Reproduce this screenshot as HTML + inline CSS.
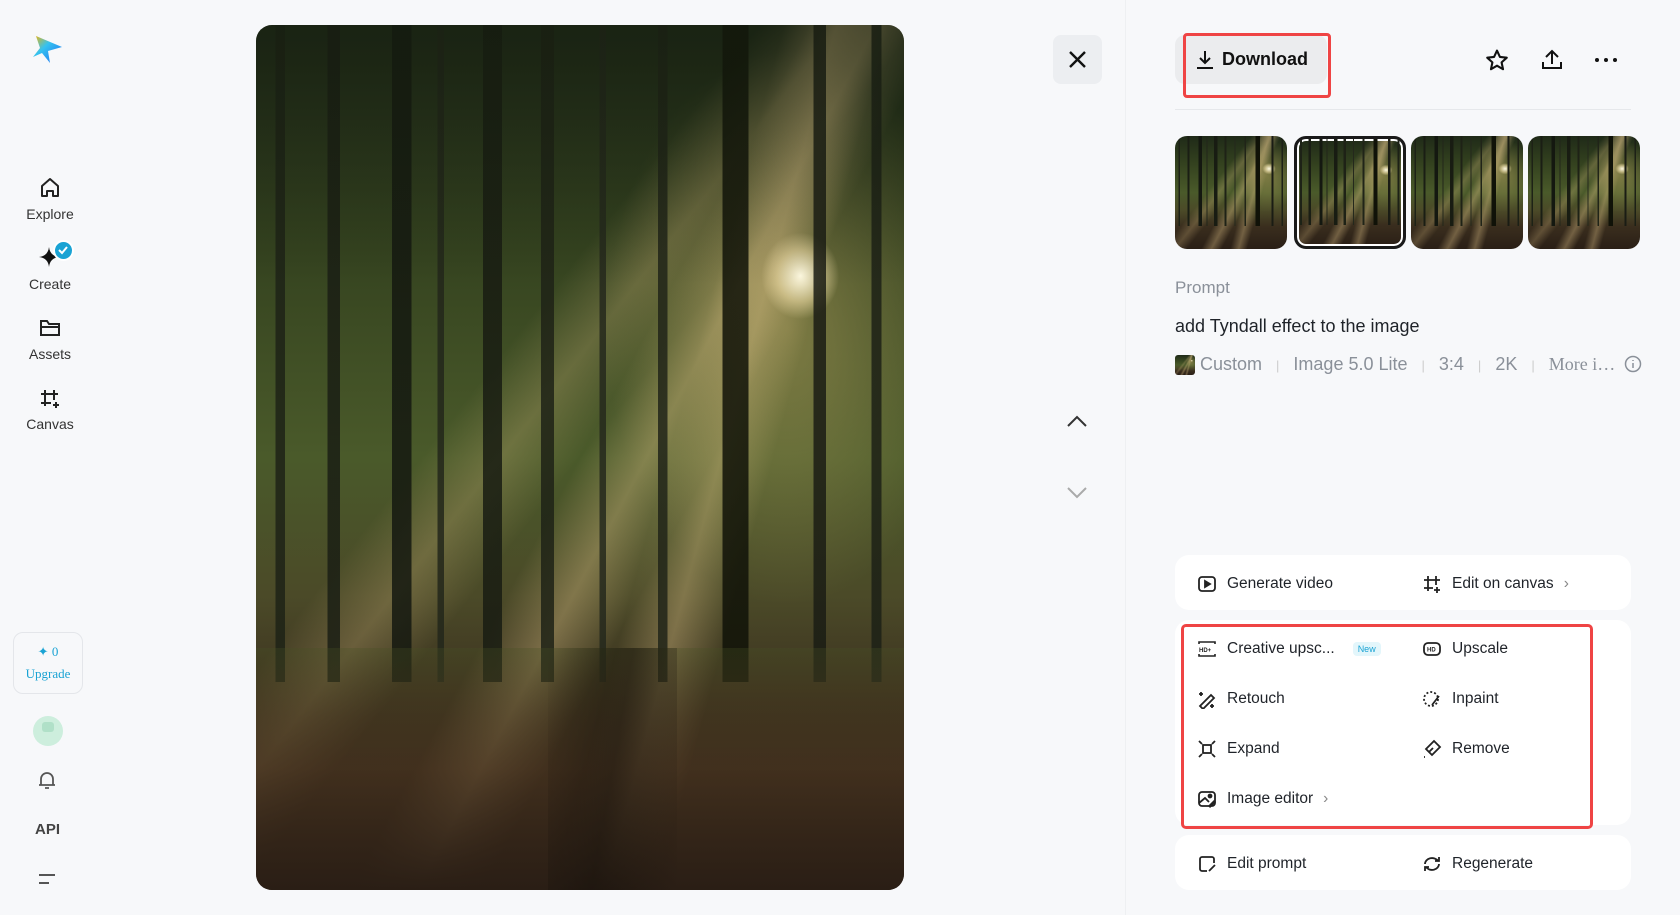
<!DOCTYPE html>
<html><head><meta charset="utf-8"><style>
*{box-sizing:border-box;margin:0;padding:0}
body{width:1680px;height:915px;background:#f7f8fa;font-family:"Liberation Sans",sans-serif;color:#1f2329;position:relative;overflow:hidden}
.abs{position:absolute}
.nav{position:absolute;left:0;width:100px;text-align:center;font-size:14px;color:#333}
.forest{background:
 radial-gradient(ellipse 6% 5% at 84% 29%,rgba(255,250,225,1),rgba(255,235,180,.5) 60%,transparent 100%),
 linear-gradient(118deg,transparent 50%,rgba(230,200,140,.35) 56%,transparent 62%),
 linear-gradient(105deg,transparent 60%,rgba(230,200,140,.35) 66%,transparent 72%),
 linear-gradient(128deg,transparent 38%,rgba(220,190,130,.25) 44%,transparent 50%),
 radial-gradient(ellipse 35% 40% at 82% 35%,rgba(190,170,100,.5),transparent 80%),
 linear-gradient(180deg,#1f2a18 0%,#34421f 25%,#4a5a2a 50%,#4b4a28 66%,#3a2e1e 80%,#2a1f16 100%);}
.trees{background:
 linear-gradient(90deg,
 transparent 3%,#1d2216 3%,#1d2216 4.5%,transparent 4.5%,
 transparent 11%,#1a1e14 11%,#1a1e14 13%,transparent 13%,
 transparent 21%,#141810 21%,#141810 24%,transparent 24%,
 transparent 28%,#22261a 28%,#22261a 29%,transparent 29%,
 transparent 35%,#181c12 35%,#181c12 38%,transparent 38%,
 transparent 44%,#1e2216 44%,#1e2216 46%,transparent 46%,
 transparent 53%,#24281c 53%,#24281c 54%,transparent 54%,
 transparent 62%,#202418 62%,#202418 63.5%,transparent 63.5%,
 transparent 72%,#101208 72%,#101208 76%,transparent 76%,
 transparent 86%,#1a1c14 86%,#1a1c14 88%,transparent 88%,
 transparent 95%,#1c2016 95%,#1c2016 96.5%,transparent 96.5%);}
.card{position:absolute;left:1175px;width:456px;background:#fff;border-radius:14px}
.row{position:absolute;font-size:15.5px;color:#1f2329;display:flex;align-items:center;gap:10px}
.row svg{width:20px;height:20px}
.thumb{position:absolute;top:136px;width:112px;height:113px;border-radius:12px;overflow:hidden}
</style></head><body>
<svg class="abs" style="left:30px;top:33px" width="34" height="34" viewBox="0 0 34 34"><defs><linearGradient id="lg" x1="0" y1="0" x2="1" y2="1"><stop offset="0" stop-color="#f6b400"/><stop offset=".4" stop-color="#35c2f0"/><stop offset="1" stop-color="#1d6af2"/></linearGradient></defs><path d="M6 3 L32 14 L18 18 L20 30 L12 20 L3 24 L10 15Z" fill="url(#lg)"/></svg>
<svg class="abs" style="left:38px;top:176px" width="24" height="24" viewBox="0 0 24 24" fill="none" stroke="#222" stroke-width="2"><path d="M4 10 L12 3 L20 10 V20 H15 V15 H9 V20 H4Z" stroke-linejoin="round"/></svg>
<div class="nav" style="top:206px">Explore</div>
<svg class="abs" style="left:38px;top:246px" width="22" height="22" viewBox="0 0 22 22"><path d="M11 1 Q12 10 21 11 Q12 12 11 21 Q10 12 1 11 Q10 10 11 1Z" fill="#111"/></svg>
<div class="abs" style="left:53px;top:240px;width:21px;height:21px;border-radius:50%;background:#1aa3d4;border:2px solid #fff"></div>
<svg class="abs" style="left:57px;top:245px" width="12" height="10" viewBox="0 0 12 10"><path d="M2 5 L5 8 L10 2" stroke="#fff" stroke-width="2" fill="none"/></svg>
<div class="nav" style="top:276px">Create</div>
<svg class="abs" style="left:39px;top:318px" width="22" height="20" viewBox="0 0 22 20" fill="none" stroke="#222" stroke-width="2"><path d="M2 3 H8 L10 6 H20 V17 H2Z M2 9 H20"/></svg>
<div class="nav" style="top:346px">Assets</div>
<svg class="abs" style="left:39px;top:388px" width="22" height="22" viewBox="0 0 22 22" fill="none" stroke="#222" stroke-width="2"><path d="M6 2 V18 M15 2 V12 M2 6 H19 M2 15 H12 M17 14 V20 M14 17 H20"/></svg>
<div class="nav" style="top:416px">Canvas</div>
<div class="abs" style="left:13px;top:632px;width:70px;height:62px;border:1px solid #e4e6ea;border-radius:10px;text-align:center;font-family:'Liberation Serif',serif;color:#1aa3d4;font-size:13px;padding-top:8px;line-height:22px">✦ 0<br>Upgrade</div>
<div class="abs" style="left:33px;top:716px;width:30px;height:30px;border-radius:50%;background:#cdeedd"></div>
<div class="abs" style="left:42px;top:722px;width:12px;height:10px;border-radius:3px;background:#b0e0c8"></div>
<svg class="abs" style="left:36px;top:769px" width="22" height="22" viewBox="0 0 22 22" fill="none" stroke="#555" stroke-width="1.8"><path d="M5 16 V10 A6 6 0 0 1 17 10 V16 H3 H19 M9 19 H13"/></svg>
<div class="abs" style="left:0;width:95px;top:821px;text-align:center;font-weight:bold;font-size:15px;color:#444">API</div>
<svg class="abs" style="left:37px;top:872px" width="20" height="14" viewBox="0 0 20 14" stroke="#555" stroke-width="2"><path d="M2 3 H18 M2 11 H12"/></svg>

<div class="abs forest" style="left:256px;top:25px;width:648px;height:865px;border-radius:16px;overflow:hidden">
 <div class="abs trees" style="left:0;top:0;width:100%;height:76%;opacity:.85"></div>
 <div class="abs" style="left:0;top:0;width:100%;height:30%;background:linear-gradient(180deg,rgba(20,28,14,.5),transparent)"></div>
 <div class="abs" style="left:0;bottom:0;width:100%;height:28%;background:linear-gradient(180deg,rgba(70,80,35,.3),rgba(70,50,30,.7) 50%,#2a1e15)"></div>
 <div class="abs" style="left:45%;bottom:0;width:20%;height:28%;background:linear-gradient(100deg,transparent,rgba(20,15,10,.5),transparent)"></div>
</div>

<div class="abs" style="left:1053px;top:35px;width:49px;height:49px;border-radius:8px;background:#eceef1"></div>
<svg class="abs" style="left:1067px;top:49px" width="21" height="21" viewBox="0 0 21 21" stroke="#111" stroke-width="2.4"><path d="M3 3 L18 18 M18 3 L3 18"/></svg>
<svg class="abs" style="left:1066px;top:414px" width="22" height="14" viewBox="0 0 22 14" fill="none" stroke="#333" stroke-width="2"><path d="M2 12 L11 3 L20 12"/></svg>
<svg class="abs" style="left:1066px;top:486px" width="22" height="14" viewBox="0 0 22 14" fill="none" stroke="#aaa" stroke-width="2"><path d="M2 2 L11 11 L20 2"/></svg>
<div class="abs" style="left:1125px;top:0;width:1px;height:915px;background:#eef0f2"></div>

<div class="abs" style="left:1175px;top:35px;width:152px;height:49px;border-radius:10px;background:#ebecee"></div>
<div class="abs" style="left:1183px;top:33px;width:148px;height:65px;border:3px solid #ef4444;border-radius:4px"></div>
<svg class="abs" style="left:1196px;top:50px" width="18" height="20" viewBox="0 0 18 20" fill="none" stroke="#111" stroke-width="2"><path d="M9 1 V13 M4 8 L9 13 L14 8 M1 18 H17"/></svg>
<div class="abs" style="left:1222px;top:49px;font-size:18px;font-weight:bold;color:#111">Download</div>
<svg class="abs" style="left:1484px;top:48px" width="26" height="25" viewBox="0 0 24 24" fill="none" stroke="#111" stroke-width="2" stroke-linejoin="round"><path d="M12 2.5 L14.8 8.6 L21.4 9.3 L16.4 13.8 L17.8 20.4 L12 17 L6.2 20.4 L7.6 13.8 L2.6 9.3 L9.2 8.6Z"/></svg>
<svg class="abs" style="left:1540px;top:48px" width="24" height="24" viewBox="0 0 24 24" fill="none" stroke="#111" stroke-width="2"><path d="M12 16 V3 M6 9 L12 3 L18 9 M3 14 V20 H21 V14"/></svg>
<svg class="abs" style="left:1594px;top:56px" width="24" height="8" viewBox="0 0 24 8" fill="#111"><circle cx="3" cy="4" r="2"/><circle cx="12" cy="4" r="2"/><circle cx="21" cy="4" r="2"/></svg>
<div class="abs" style="left:1175px;top:109px;width:456px;height:1px;background:#e6e8eb"></div>

<div class="thumb forest" style="left:1175px"><div class="abs trees" style="inset:0;height:80%"></div></div>
<div class="thumb forest" style="left:1294px;border:3px solid #1a1a1a;box-shadow:inset 0 0 0 2px #fff"><div class="abs trees" style="inset:0;height:80%"></div></div>
<div class="thumb forest" style="left:1411px"><div class="abs trees" style="inset:0;height:80%"></div></div>
<div class="thumb forest" style="left:1528px"><div class="abs trees" style="inset:0;height:80%"></div></div>

<div class="abs" style="left:1175px;top:278px;font-size:17px;color:#8a9099">Prompt</div>
<div class="abs" style="left:1175px;top:316px;font-size:18px;color:#1f2329">add Tyndall effect to the image</div>
<div class="abs forest" style="left:1175px;top:355px;width:20px;height:20px;border-radius:3px"></div>
<div class="abs" style="left:1200px;top:354px;font-size:18px;color:#8a9099;white-space:nowrap">Custom <span style="color:#ccc;font-size:13px;margin:0 9px">|</span> Image 5.0 Lite <span style="color:#ccc;font-size:13px;margin:0 9px">|</span> 3:4 <span style="color:#ccc;font-size:13px;margin:0 9px">|</span> 2K <span style="color:#ccc;font-size:13px;margin:0 9px">|</span> <span style="font-family:'Liberation Serif',serif">More i…</span></div>
<svg class="abs" style="left:1624px;top:355px" width="18" height="18" viewBox="0 0 18 18" fill="none" stroke="#8a9099" stroke-width="1.5"><circle cx="9" cy="9" r="7.5"/><path d="M9 8 V13 M9 5 V6"/></svg>

<div class="card" style="top:555px;height:55px"></div>
<div class="card" style="top:620px;height:205px"></div>
<div class="card" style="top:835px;height:55px"></div>
<div class="abs" style="left:1181px;top:624px;width:412px;height:205px;border:3px solid #ef4444;border-radius:5px"></div>

<div class="row" style="left:1197px;top:574px"><svg viewBox="0 0 20 20" fill="none" stroke="#222" stroke-width="1.8"><rect x="2" y="3" width="16" height="14" rx="3"/><path d="M8 7 L13 10 L8 13Z" fill="#222"/></svg>Generate video</div>
<div class="row" style="left:1422px;top:574px"><svg viewBox="0 0 20 20" fill="none" stroke="#222" stroke-width="1.8"><path d="M6 2 V17 M14 2 V11 M2 6 H18 M2 14 H11 M15 13 V19 M12 16 H18"/></svg>Edit on canvas <span style="color:#888">›</span></div>

<div class="row" style="left:1197px;top:639px"><svg viewBox="0 0 20 20" fill="none" stroke="#222" stroke-width="1.6"><path d="M2 5 V3 H18 V5 M2 15 V17 H18 V15"/><text x="2" y="13" font-size="6" font-weight="bold" fill="#222" stroke="none" font-family="Liberation Sans">HD+</text></svg>Creative upsc... <span style="margin-left:8px;font-size:9px;color:#1aa3d4;background:#e3f6fb;padding:2px 5px;border-radius:4px">New</span></div>
<div class="row" style="left:1422px;top:639px"><svg viewBox="0 0 20 20" fill="none" stroke="#222" stroke-width="1.8"><rect x="2" y="4" width="16" height="12" rx="4"/><text x="5" y="12.5" font-size="6" font-weight="bold" fill="#222" stroke="none" font-family="Liberation Sans">HD</text></svg>Upscale</div>
<div class="row" style="left:1197px;top:689px"><svg viewBox="0 0 20 20" fill="none" stroke="#222" stroke-width="1.8"><path d="M3 17 L14 6 L17 9 L6 20Z M4 3 V7 M2 5 H6 M15 15 V19 M13 17 H17"/></svg>Retouch</div>
<div class="row" style="left:1422px;top:689px"><svg viewBox="0 0 20 20" fill="none" stroke="#222" stroke-width="1.8" stroke-dasharray="2 2"><circle cx="9" cy="10" r="7"/><path d="M10 16 L17 7" stroke-dasharray="none"/></svg>Inpaint</div>
<div class="row" style="left:1197px;top:739px"><svg viewBox="0 0 20 20" fill="none" stroke="#222" stroke-width="1.8"><rect x="6" y="6" width="8" height="8"/><path d="M2 2 L5 5 M18 2 L15 5 M2 18 L5 15 M18 18 L15 15"/></svg>Expand</div>
<div class="row" style="left:1422px;top:739px"><svg viewBox="0 0 20 20" fill="none" stroke="#222" stroke-width="1.8"><path d="M12 2 L18 8 L10 16 L4 10Z M7 13 L11 9" /><path d="M2 18 H5" stroke-dasharray="1 2"/></svg>Remove</div>
<div class="row" style="left:1197px;top:789px"><svg viewBox="0 0 20 20" fill="none" stroke="#222" stroke-width="1.8"><rect x="2" y="3" width="16" height="14" rx="3"/><circle cx="13" cy="7" r="1.5" fill="#222"/><path d="M2 14 L8 9 L12 13" /><path d="M12 18 L18 12" stroke-width="3"/></svg>Image editor <span style="color:#888">›</span></div>
<div class="row" style="left:1197px;top:854px"><svg viewBox="0 0 20 20" fill="none" stroke="#222" stroke-width="1.8"><path d="M17 9 V5 A2 2 0 0 0 15 3 H5 A2 2 0 0 0 3 5 V15 A2 2 0 0 0 5 17 H10 M12 17 L18 11"/></svg>Edit prompt</div>
<div class="row" style="left:1422px;top:854px"><svg viewBox="0 0 20 20" fill="none" stroke="#222" stroke-width="1.8"><path d="M3 10 A7 6 0 0 1 16 7 M17 10 A7 6 0 0 1 4 13 M13 7 H17 V3 M7 13 H3 V17"/></svg>Regenerate</div>
</body></html>
